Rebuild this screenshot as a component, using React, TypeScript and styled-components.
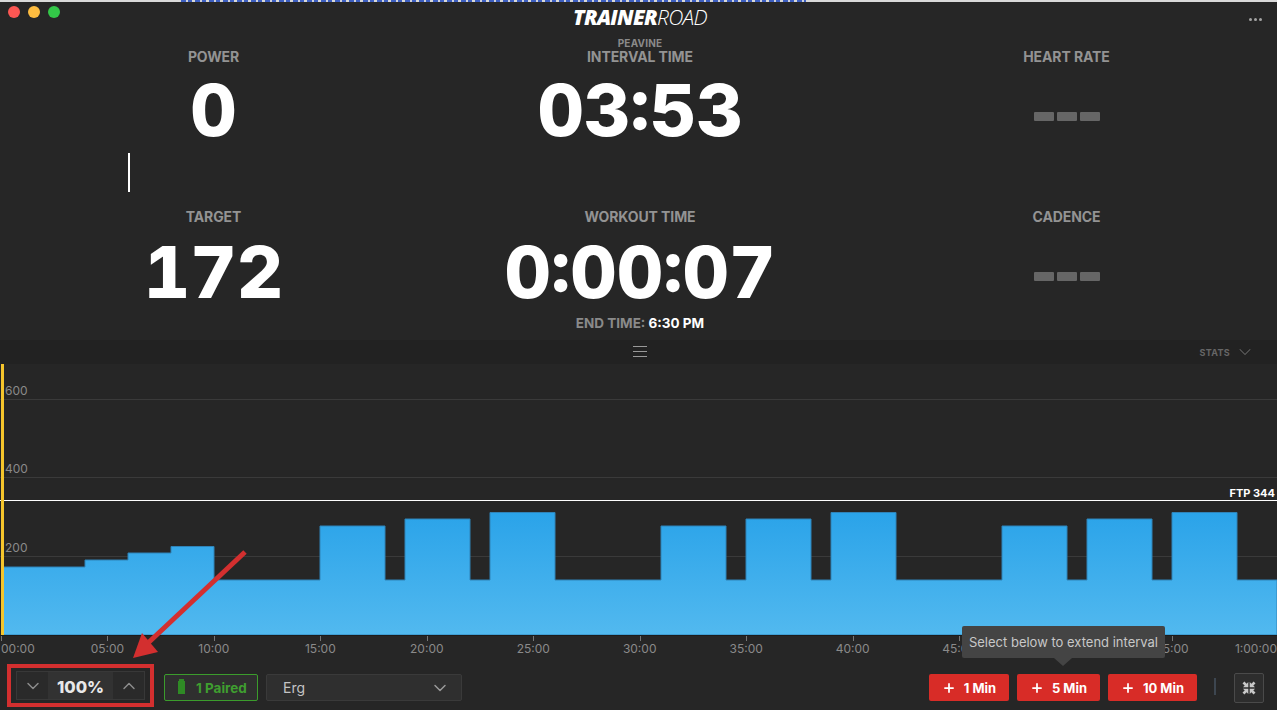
import * as React from 'react';
import styled, { createGlobalStyle } from 'styled-components';
import { ChevronDown, ChevronUp, Plus } from 'lucide-react';

const GlobalStyle = createGlobalStyle`
    * {
        box-sizing: border-box;
    }

    html, body {
        margin: 0;
        height: 100%;
        background: #262626;
        overflow: hidden;
    }

    body {
        font-family: Inter, "Liberation Sans", sans-serif;
        color: #fff;
    }
`;

const Page = styled.div`
    position: relative;
    width: 1277px;
    height: 710px;
    display: flex;
    flex-direction: column;
    overflow: hidden;
    background: #262626;
`;

const BrowserStrip = styled.div`
    height: 2px;
    flex: none;
    background: #d9d9d9;
    padding-left: 181px;
`;

const BrowserLink = styled.div`
    width: 625px;
    height: 2px;
    background: repeating-linear-gradient(90deg, #3d5fc0 0 5px, #cfd3de 5px 7px, #3d5fc0 7px 11px, #d9d9d9 11px 14px);
`;

const Header = styled.header`
    height: 47px;
    flex: none;
    display: grid;
    grid-template-columns: 427px 426px 424px;
    position: relative;
`;

const Lights = styled.div`
    display: flex;
    gap: 8px;
    padding: 4px 0 0 8px;
`;

const Light = styled.span<{ $color: string }>`
    width: 12px;
    height: 12px;
    border-radius: 50%;
    background: ${p => p.$color};
`;

const HeaderCenter = styled.div`
    display: flex;
    flex-direction: column;
    align-items: center;
`;

const Logo = styled.div`
    margin-top: 4px;
    height: 23px;
    font-size: 21px;
    line-height: 23px;
    font-style: italic;
    letter-spacing: -0.7px;
    font-family: "Open Sans", sans-serif;
    display: flex;
`;

const LogoHeavy = styled.span`
    font-weight: 800;
`;

const LogoLight = styled.span`
    font-weight: 300;
`;

const WorkoutName = styled.div`
    margin-top: 9px;
    font-size: 10px;
    line-height: 11px;
    font-weight: 700;
    letter-spacing: 0.2px;
    color: #8a8a8a;
`;

const HeaderRight = styled.div`
    display: flex;
    justify-content: flex-end;
    gap: 2px;
    padding: 16px 15px 0 0;
`;

const MoreDot = styled.span`
    width: 3px;
    height: 3px;
    border-radius: 50%;
    background: #a3a3a3;
`;

const Metrics = styled.section`
    height: 291px;
    flex: none;
    display: grid;
    grid-template-columns: 427px 426px 427px;
    grid-template-rows: 160px 131px;
`;

const Metric = styled.div`
    position: relative;
    display: flex;
    flex-direction: column;
    align-items: center;
`;

const MetricLabel = styled.div`
    height: 16px;
    font-size: 14px;
    line-height: 16px;
    font-weight: 700;
    letter-spacing: -0.1px;
    color: #939393;
    white-space: nowrap;
`;

const MetricValue = styled.div`
    margin-top: 8px;
    height: 74px;
    font-size: 72px;
    line-height: 74px;
    font-weight: 800;
    letter-spacing: 0;
    font-variant-numeric: tabular-nums;
    color: #fff;
    white-space: nowrap;
`;

const LowerValue = styled(MetricValue)`
    margin-top: 10px;
`;

const NoValue = styled.div`
    margin-top: 14px;
    height: 74px;
    display: flex;
    align-items: center;
    gap: 3px;
`;

const NoValueDash = styled.span`
    width: 20px;
    height: 9px;
    border-radius: 1px;
    background: #666;
`;

const Caret = styled.div`
    position: absolute;
    left: 128px;
    top: 104px;
    width: 2px;
    height: 39px;
    background: #fff;
`;

const EndTime = styled.div`
    margin-top: 6px;
    font-size: 13.5px;
    line-height: 16px;
    font-weight: 700;
    color: #8a8a8a;
    white-space: nowrap;
`;

const EndTimeValue = styled.span`
    color: #fff;
`;

const StatsBar = styled.div`
    height: 24px;
    flex: none;
    background: #222;
    display: grid;
    grid-template-columns: 1fr 1fr;
    align-items: center;
    position: relative;
`;

const Hamburger = styled.span`
    position: absolute;
    left: 633px;
    top: 6px;
    width: 14px;
    height: 11px;
    border-top: 1px solid #999;
    border-bottom: 1px solid #999;

    &::after {
        content: "";
        position: absolute;
        left: 0;
        right: 0;
        top: 4px;
        height: 1px;
        background: #999;
    }
`;

const StatsToggle = styled.div`
    grid-column: 2;
    justify-self: end;
    display: flex;
    align-items: center;
    gap: 5px;
    padding-right: 22px;
    font-size: 9px;
    font-weight: 700;
    letter-spacing: 0.3px;
    color: #666;
`;

const ChartSvg = styled.svg`
    display: block;
    flex: none;
    width: 1277px;
    height: 296px;
`;

const AxisText = styled.text`
    font-family: Inter, "Liberation Sans", sans-serif;
    font-size: 12px;
    fill: #8a8a8a;
`;

const FtpText = styled.text`
    font-family: Inter, "Liberation Sans", sans-serif;
    font-size: 11px;
    font-weight: 700;
    fill: #fff;
`;

const Toolbar = styled.footer`
    flex: 1;
    display: flex;
    align-items: flex-start;
    padding: 0 13px 0 7px;
`;

const Annotated = styled.div`
    width: 147px;
    height: 43px;
    margin-top: 4px;
    flex: none;
    border: 4px solid #d32f2f;
    padding: 3px 5px;
`;

const Stepper = styled.div`
    height: 29px;
    display: grid;
    grid-template-columns: 31px 65px 31px;
    border: 1px solid #383838;
    background: #2a2a2a;
`;

const StepButton = styled.div`
    display: flex;
    align-items: center;
    justify-content: center;
    color: #8c8c8c;
`;

const StepValue = styled.div`
    display: flex;
    align-items: center;
    justify-content: center;
    padding-top: 2px;
    background: #323232;
    font-size: 16.5px;
    font-weight: 800;
    color: #e8e8e8;
`;

const Paired = styled.div`
    margin: 14px 0 0 10px;
    width: 94px;
    height: 27px;
    display: flex;
    align-items: center;
    gap: 11px;
    padding-left: 13px;
    border: 1px solid #3b9c2c;
    border-radius: 2px;
    background: #2f2f2f;
    font-size: 13.5px;
    font-weight: 700;
    color: #3f9e30;
`;

const Battery = styled.span`
    position: relative;
    width: 7px;
    height: 13px;
    background: #2f8a25;

    &::before {
        content: "";
        position: absolute;
        left: 1px;
        right: 1px;
        top: -2px;
        height: 2px;
        background: #2f8a25;
    }
`;

const ModeSelect = styled.div`
    margin: 14px 0 0 8px;
    width: 196px;
    height: 27px;
    display: flex;
    align-items: center;
    justify-content: space-between;
    padding: 0 11px 0 16px;
    border: 1px solid #3a3a3a;
    border-radius: 2px;
    background: #2f2f2f;
    font-size: 14px;
    color: #c4c4c4;
`;

const Spacer = styled.div`
    flex: 1;
`;

const Extenders = styled.div`
    position: relative;
    margin-top: 14px;
    display: flex;
    gap: 8px;
`;

const ExtendButton = styled.div<{ $width: number }>`
    width: ${p => p.$width}px;
    height: 27px;
    display: flex;
    align-items: center;
    justify-content: center;
    gap: 8px;
    border-radius: 2px;
    background: #d82c27;
    font-size: 13px;
    font-weight: 700;
    color: #fff;
`;

const Tooltip = styled.div`
    position: absolute;
    left: 33px;
    top: -48px;
    width: 203px;
    height: 32px;
    display: flex;
    align-items: center;
    justify-content: center;
    border-radius: 2px;
    background: #444;
    font-size: 13px;
    color: #c8c8c8;
    white-space: nowrap;

    &::after {
        content: "";
        position: absolute;
        left: 92px;
        top: 32px;
        border-left: 9px solid transparent;
        border-right: 9px solid transparent;
        border-top: 8px solid #444;
    }
`;

const Divider = styled.div`
    width: 2px;
    height: 17px;
    margin: 18px 0 0 17px;
    background: #3d4650;
`;

const CollapseButton = styled.div`
    margin: 13px 0 0 18px;
    width: 30px;
    height: 30px;
    display: flex;
    align-items: center;
    justify-content: center;
    border: 1px solid #4a4a4a;
    border-radius: 2px;
    background: #2d2d2d;
    color: #c8c8c8;
`;

const ArrowOverlay = styled.svg`
    position: absolute;
    left: 0;
    top: 0;
    width: 1277px;
    height: 710px;
    pointer-events: none;
`;

// chart drawing is offset by the 364px above it
const CHART_TOP = 364;
const BASE = 635 - CHART_TOP;
const blocks: [number, number][] = [
    [85, 567], [128, 560], [171, 553], [214, 546.5], [320, 580],
    [385, 526], [405, 580], [470, 519], [490, 580], [555, 512.5], [661, 580],
    [726, 526], [746, 580], [811, 519], [831, 580], [896, 512.5], [1002, 580],
    [1067, 526], [1087, 580], [1152, 519], [1172, 580], [1237, 512.5], [1277, 580],
];

const workoutPath = () => {
    let x = 3;
    let d = `M3 ${BASE}`;
    blocks.forEach(([end, top]) => {
        const y = top - CHART_TOP;
        d += ` L${x} ${y} L${end} ${y}`;
        x = end;
    });
    return d + ` L1277 ${BASE} Z`;
};

const ticks = ['00:00', '05:00', '10:00', '15:00', '20:00', '25:00', '30:00', '35:00', '40:00', '45:00', '50:00', '55:00', '1:00:00'];

const Chart = () => (
    <ChartSvg viewBox="0 0 1277 296">
        <defs>
            <linearGradient id="workout" gradientUnits="userSpaceOnUse" x1="0" y1="148" x2="0" y2="271">
                <stop offset="0" stopColor="#2aa3e9" />
                <stop offset="1" stopColor="#52b9ef" />
            </linearGradient>
        </defs>
        {[35, 113, 192].map(y => <rect key={y} x="0" y={y} width="1277" height="1" fill="#3a3a3a" />)}
        <AxisText x="5" y="31">600</AxisText>
        <AxisText x="5" y="109">400</AxisText>
        <AxisText x="5" y="188">200</AxisText>
        <path d={workoutPath()} fill="url(#workout)" stroke="#2f83b8" strokeWidth="1" />
        <rect x="0" y="136" width="1277" height="1" fill="#fff" />
        <FtpText x="1275" y="133" textAnchor="end">FTP 344</FtpText>
        <rect x="1" y="0" width="3" height="272" fill="#f5c52c" />
        <rect x="0" y="271" width="1277" height="1" fill="#1c1c1c" />
        {ticks.map((t, i) => {
            const x = 1 + i * 106.45;
            return <g key={t}>
                <rect x={Math.round(x)} y="272" width="1" height="5" fill="#777" />
                <AxisText x={i === 0 ? 1 : i === 12 ? 1277 : x} y="289" textAnchor={i === 0 ? 'start' : i === 12 ? 'end' : 'middle'}>{t}</AxisText>
            </g>;
        })}
    </ChartSvg>
);

const inwardArrow = 'M6.3 6.3V1L4.6 2.7L2.4.5L.5 2.4L2.7 4.6L1 6.3Z';

const CollapseIcon = () => (
    <svg width="14" height="14" viewBox="0 0 14 14" fill="currentColor">
        <path d={inwardArrow} />
        <path d={inwardArrow} transform="matrix(-1 0 0 1 14 0)" />
        <path d={inwardArrow} transform="matrix(1 0 0 -1 0 14)" />
        <path d={inwardArrow} transform="matrix(-1 0 0 -1 14 14)" />
    </svg>
);

const App: React.FC = () => {
    return <Page>
        <GlobalStyle />
        <BrowserStrip><BrowserLink /></BrowserStrip>
        <Header>
            <Lights>
                <Light $color="#fc5753" />
                <Light $color="#fdbc40" />
                <Light $color="#33c748" />
            </Lights>
            <HeaderCenter>
                <Logo><LogoHeavy>TRAINER</LogoHeavy><LogoLight>ROAD</LogoLight></Logo>
                <WorkoutName>PEAVINE</WorkoutName>
            </HeaderCenter>
            <HeaderRight><MoreDot /><MoreDot /><MoreDot /></HeaderRight>
        </Header>
        <Metrics>
            <Metric>
                <MetricLabel>POWER</MetricLabel>
                <MetricValue>0</MetricValue>
                <Caret />
            </Metric>
            <Metric>
                <MetricLabel>INTERVAL TIME</MetricLabel>
                <MetricValue>03:53</MetricValue>
            </Metric>
            <Metric>
                <MetricLabel>HEART RATE</MetricLabel>
                <NoValue><NoValueDash /><NoValueDash /><NoValueDash /></NoValue>
            </Metric>
            <Metric>
                <MetricLabel>TARGET</MetricLabel>
                <LowerValue>172</LowerValue>
            </Metric>
            <Metric>
                <MetricLabel>WORKOUT TIME</MetricLabel>
                <LowerValue>0:00:07</LowerValue>
                <EndTime>END TIME: <EndTimeValue>6:30 PM</EndTimeValue></EndTime>
            </Metric>
            <Metric>
                <MetricLabel>CADENCE</MetricLabel>
                <NoValue><NoValueDash /><NoValueDash /><NoValueDash /></NoValue>
            </Metric>
        </Metrics>
        <StatsBar>
            <Hamburger />
            <StatsToggle>STATS <ChevronDown size={20} strokeWidth={1.25} color="#666" /></StatsToggle>
        </StatsBar>
        <Chart />
        <Toolbar>
            <Annotated>
                <Stepper>
                    <StepButton><ChevronDown size={20} strokeWidth={1.75} /></StepButton>
                    <StepValue>100%</StepValue>
                    <StepButton><ChevronUp size={20} strokeWidth={1.75} /></StepButton>
                </Stepper>
            </Annotated>
            <Paired><Battery />1 Paired</Paired>
            <ModeSelect>Erg <ChevronDown size={20} strokeWidth={1.75} color="#9a9a9a" /></ModeSelect>
            <Spacer />
            <Extenders>
                <Tooltip>Select below to extend interval</Tooltip>
                <ExtendButton $width={80}><Plus size={14} strokeWidth={3} />1 Min</ExtendButton>
                <ExtendButton $width={83}><Plus size={14} strokeWidth={3} />5 Min</ExtendButton>
                <ExtendButton $width={89}><Plus size={14} strokeWidth={3} />10 Min</ExtendButton>
            </Extenders>
            <Divider />
            <CollapseButton><CollapseIcon /></CollapseButton>
        </Toolbar>
        <ArrowOverlay viewBox="0 0 1277 710">
            <path d="M245 552L148 643" stroke="#d32f2f" strokeWidth="5" fill="none" />
            <path d="M133 658L142 633L158 652Z" fill="#d32f2f" />
        </ArrowOverlay>
    </Page>;
};

export default App;
